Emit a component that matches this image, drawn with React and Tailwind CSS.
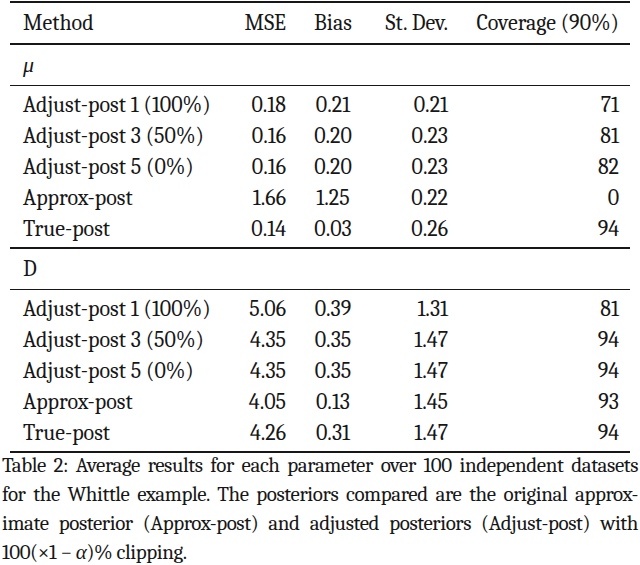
const sections = [
  {
    label: <span className="italic">μ</span>,
    rows: [
      ['Adjust-post 1 (100%)', '0.18', '0.21', '0.21', '71'],
      ['Adjust-post 3 (50%)', '0.16', '0.20', '0.23', '81'],
      ['Adjust-post 5 (0%)', '0.16', '0.20', '0.23', '82'],
      ['Approx-post', '1.66', '1.25', '0.22', '0'],
      ['True-post', '0.14', '0.03', '0.26', '94'],
    ],
  },
  {
    label: 'D',
    rows: [
      ['Adjust-post 1 (100%)', '5.06', '0.39', '1.31', '81'],
      ['Adjust-post 3 (50%)', '4.35', '0.35', '1.47', '94'],
      ['Adjust-post 5 (0%)', '4.35', '0.35', '1.47', '94'],
      ['Approx-post', '4.05', '0.13', '1.45', '93'],
      ['True-post', '4.26', '0.31', '1.47', '94'],
    ],
  },
]

function Row({ cells, h = 'h-[31px] leading-[31px]' }) {
  const [name, mse, bias, sd, cov] = cells
  return (
    <div className={`grid grid-cols-[207px_56px_94px_68px_171px] pl-[13px] whitespace-nowrap ${h}`}>
      <div>{name}</div>
      <div className="text-right">{mse}</div>
      <div className="text-center">{bias}</div>
      <div className="text-right">{sd}</div>
      <div className="text-right">{cov}</div>
    </div>
  )
}

function Section({ label, rows }) {
  return (
    <>
      <div className="h-[1.5px] bg-neutral-900" />
      <div className="h-[40px] leading-[40px] pl-[13px]">{label}</div>
      <div className="h-[1.5px] bg-neutral-900" />
      <div className="pt-[4px] pb-[2px]">
        {rows.map((r, i) => <Row key={i} cells={r} />)}
      </div>
    </>
  )
}

function CaptionLine({ children }) {
  return (
    <div className="text-justify [text-align-last:justify] whitespace-nowrap">
      {children}
    </div>
  )
}

export default function App() {
  return (
    <div className="w-[640px] h-[565px] overflow-hidden bg-white text-neutral-900 font-serif">
      <div className="mx-[10px] mt-[1px] text-[22px]">
        <div className="h-[2px] bg-neutral-900" />
        <Row cells={['Method', 'MSE', 'Bias', 'St. Dev.', 'Coverage (90%)']} h="h-[40px] leading-[40px]" />
        {sections.map((s, i) => <Section key={i} {...s} />)}
        <div className="h-[2px] bg-neutral-900" />
      </div>

      {/* caption */}
      <div className="-mt-[2px] px-[2px] text-[21px] leading-[29px] tracking-[-0.4px]">
        <CaptionLine>Table 2: Average results for each parameter over 100 independent datasets</CaptionLine>
        <CaptionLine>for the Whittle example. The posteriors compared are the original approx-</CaptionLine>
        <CaptionLine>imate posterior (Approx-post) and adjusted posteriors (Adjust-post) with</CaptionLine>
        <div>100(×1 − <span className="italic">α</span>)% clipping.</div>
      </div>
    </div>
  )
}
